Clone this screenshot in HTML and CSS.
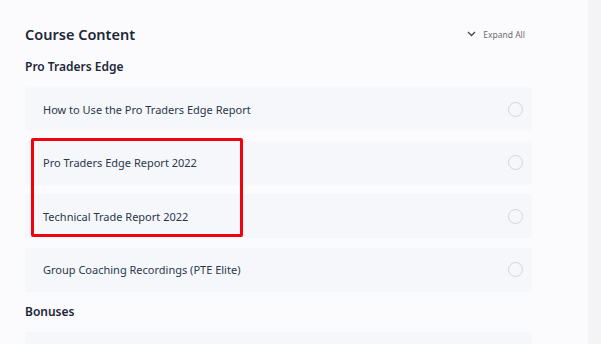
FILE: index.html
```html
<!DOCTYPE html>
<html lang="en">
<head>
  <meta charset="UTF-8" />
  <title>Course Content</title>
  <link rel="stylesheet" href="styles.css">
</head>
<body>
  <div class="page">
    <div class="content">
      <div class="header">
        <h1>Course Content</h1>
        <span class="expand">
          <svg width="9" height="6" viewBox="0 0 9 6"><path d="M1 1 L4.5 4.5 L8 1" fill="none" stroke="#444" stroke-width="1.3"/></svg>
          Expand All
        </span>
      </div>

      <h2>Pro Traders Edge</h2>
      <div class="lesson"><span>How to Use the Pro Traders Edge Report</span><i class="check"></i></div>
      <div class="lesson"><span>Pro Traders Edge Report 2022</span><i class="check"></i></div>
      <div class="lesson"><span>Technical Trade Report 2022</span><i class="check"></i></div>
      <div class="lesson"><span>Group Coaching Recordings (PTE Elite)</span><i class="check"></i></div>

      <h2 class="bonus">Bonuses</h2>
      <div class="lesson"><span></span></div>

      <div class="highlight"></div>
    </div>
    <div class="strip"></div>
  </div>
</body>
</html>
```

FILE: styles.css
```css
body {
  margin: 0;
  font-family: 'Noto Sans', 'Open Sans', sans-serif;
  background-color: #fbfbfd;
  overflow: hidden;
}

.page {
  display: flex;
  height: 344px;
  overflow: hidden;
}

.content {
  position: relative;
  width: 507px;
  padding: 0 0 0 25px;
  flex: none;
}

.strip {
  margin-left: auto;
  width: 13px;
  background-color: #f4f4f6;
}

.header {
  display: flex;
  align-items: center;
  justify-content: space-between;
  padding-top: 23px;
  height: 22px;
}

h1 {
  margin: 0;
  font-size: 14.5px;
  font-weight: 600;
  color: #1d2738;
}

.expand {
  display: flex;
  align-items: center;
  gap: 7px;
  padding-right: 7px;
  font-size: 8.5px;
  color: #6b6f76;
}

h2 {
  margin: 13px 0 12px;
  font-size: 12px;
  font-weight: 600;
  color: #1d2738;
  line-height: 17px;
}

.bonus {
  margin: 11px 0 12px;
}

.lesson {
  display: flex;
  align-items: center;
  justify-content: space-between;
  height: 44px;
  margin-bottom: 9.5px;
  padding: 0 9px 0 18px;
  background-color: #f6f7fa;
  border-radius: 3px;
  font-size: 11px;
  color: #2a374d;
}

.check {
  width: 13px;
  height: 13px;
  border: 1px solid #d3d4d8;
  border-radius: 50%;
}

.highlight {
  position: absolute;
  left: 31px;
  top: 138px;
  width: 206px;
  height: 93px;
  border: 3px solid #f2020c;
  border-radius: 2px;
}
```
